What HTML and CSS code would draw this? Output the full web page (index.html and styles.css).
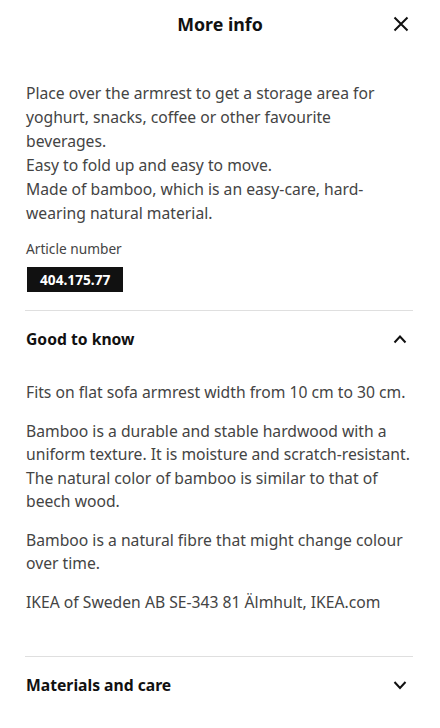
FILE: index.html
```html
<!DOCTYPE html>
<html lang="en">
<head>
	<meta charset="utf-8">
	<title>More info</title>
	<link rel="stylesheet" href="styles.css">
</head>
<body>
	<div id="sheet">
		<div class="sheet-head">
			<span></span>
			<h1 class="sheet-title">More info</h1>
			<button class="close-btn" aria-label="Close">
				<svg width="16" height="16" viewBox="0 0 16 16"><path d="M1.5 1.5l13 13M14.5 1.5l-13 13" stroke="#111" stroke-width="2" fill="none"/></svg>
			</button>
		</div>
		<div class="sheet-body">
			<p class="desc">Place over the armrest to get a storage area for yoghurt, snacks, coffee or other favourite beverages.<br>Easy to fold up and easy to move.<br>Made of bamboo, which is an easy-care, hard-wearing natural material.</p>
			<div class="article-label">Article number</div>
			<div class="article-no">404.175.77</div>

			<div class="section">
				<div class="section-head">
					<h2>Good to know</h2>
					<svg width="14" height="14" viewBox="0 0 14 14"><path d="M1.5 10.5l5.5-6 5.5 6" stroke="#111" stroke-width="2" fill="none"/></svg>
				</div>
				<div class="section-body">
					<p>Fits on flat sofa armrest width from 10 cm to 30 cm.</p>
					<p>Bamboo is a durable and stable hardwood with a uniform texture. It is moisture and scratch-resistant. The natural color of bamboo is similar to that of beech wood.</p>
					<p>Bamboo is a natural fibre that might change colour over time.</p>
					<p>IKEA of Sweden AB SE-343 81 Älmhult, IKEA.com</p>
				</div>
			</div>

			<div class="section">
				<div class="section-head">
					<h2>Materials and care</h2>
					<svg width="14" height="14" viewBox="0 0 14 14"><path d="M1.5 4l5.5 6 5.5-6" stroke="#111" stroke-width="2" fill="none"/></svg>
				</div>
			</div>
		</div>
	</div>
</body>
</html>
```
FILE: styles.css
```css
*{
	margin: 0;
	padding: 0;
	box-sizing: border-box;
}
body{
	background: #fff;
	font-family: "Noto Sans", "Open Sans", sans-serif;
	color: #444;
}
#sheet{
	width: 440px;
	min-height: 728px;
}
/*顶部标题*/
.sheet-head{
	display: grid;
	grid-template-columns: 60px 1fr 60px;
	align-items: center;
	height: 48px;
}
.sheet-title{
	text-align: center;
	font-size: 17.8px;
	font-weight: 700;
	color: #111;
}
.close-btn{
	border: none;
	background: none;
	width: 40px;
	height: 40px;
	display: flex;
	align-items: center;
	justify-content: center;
	margin-left: 1px;
}
/*内容区*/
.sheet-body{
	padding: 33px 27px 0 25px;
}
.desc{
	padding-left: 1px;
	font-size: 15.7px;
	line-height: 24px;
}
.article-label{
	margin-top: 14px;
	padding-left: 1px;
	font-size: 13.7px;
	line-height: 20px;
}
.article-no{
	width: fit-content;
	margin: 8px 0 18px 2px;
	padding: 0 13px;
	height: 25px;
	line-height: 25px;
	background: #111;
	color: #fff;
	font-size: 13.7px;
	font-weight: 700;
}
/*折叠面板*/
.section{
	border-top: 1px solid #dfdfdf;
}
.section-head{
	display: flex;
	justify-content: space-between;
	align-items: center;
	height: 55px;
	padding: 0 6px 0 1px;
}
.section-head h2{
	font-size: 15.7px;
	font-weight: 700;
	color: #111;
}
.section-body{
	padding: 15px 0 42px 1px;
}
.section-body p{
	font-size: 15.7px;
	line-height: 1.5;
	margin-bottom: 15px;
}
.section-body p:last-child{
	margin-bottom: 0;
}
```
